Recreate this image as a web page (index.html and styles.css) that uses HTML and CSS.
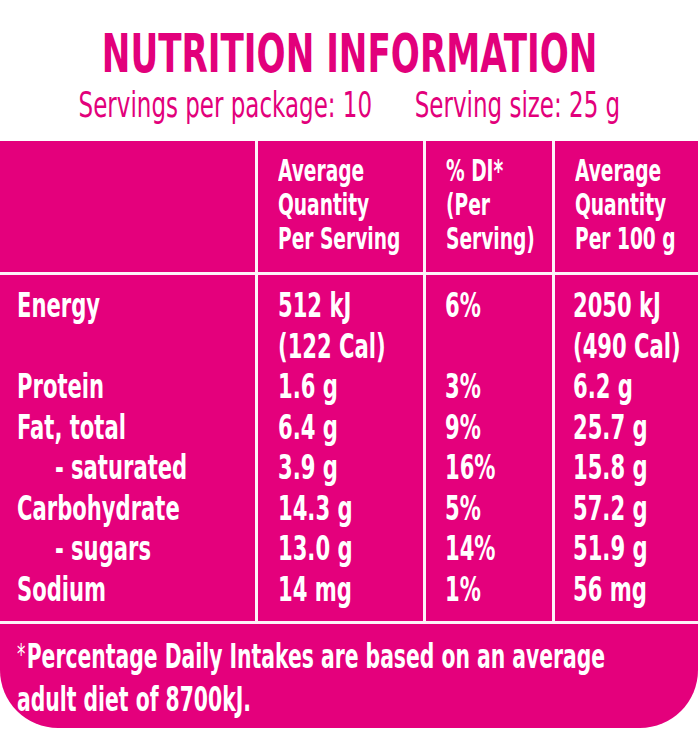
FILE: index.html
```html
<!DOCTYPE html>
<html lang="en">
<head>
<meta charset="utf-8">
<title>Nutrition Information</title>
<link rel="stylesheet" href="styles.css">
</head>
<body>
<div class="card">
  <header class="head">
    <h1 class="title"><span class="squeeze-c">NUTRITION INFORMATION</span></h1>
    <p class="servings"><span class="squeeze-c">Servings per package: 10<span class="spacer"></span>Serving size: 25 g</span></p>
  </header>
  <div class="panel">
    <div class="cell hcell"></div>
    <div class="cell hcell"><div class="txt"><div>Average</div><div>Quantity</div><div>Per Serving</div></div></div>
    <div class="cell hcell"><div class="txt"><div>% DI*</div><div>(Per</div><div>Serving)</div></div></div>
    <div class="cell hcell"><div class="txt"><div>Average</div><div>Quantity</div><div>Per 100 g</div></div></div>

    <div class="cell bcell names"><div class="txt">
      <div>Energy</div><div>&nbsp;</div>
      <div>Protein</div>
      <div>Fat, total</div>
      <div class="sub">- saturated</div>
      <div>Carbohydrate</div>
      <div class="sub">- sugars</div>
      <div>Sodium</div>
    </div></div>
    <div class="cell bcell"><div class="txt">
      <div>512 kJ</div><div>(122 Cal)</div>
      <div>1.6 g</div>
      <div>6.4 g</div>
      <div>3.9 g</div>
      <div>14.3 g</div>
      <div>13.0 g</div>
      <div>14 mg</div>
    </div></div>
    <div class="cell bcell pct"><div class="txt">
      <div>6%</div><div>&nbsp;</div>
      <div>3%</div>
      <div>9%</div>
      <div>16%</div>
      <div>5%</div>
      <div>14%</div>
      <div>1%</div>
    </div></div>
    <div class="cell bcell per100"><div class="txt">
      <div>2050 kJ</div><div>(490 Cal)</div>
      <div>6.2 g</div>
      <div>25.7 g</div>
      <div>15.8 g</div>
      <div>57.2 g</div>
      <div>51.9 g</div>
      <div>56 mg</div>
    </div></div>

    <div class="cell foot"><div class="txt"><div><span class="ast">*</span>Percentage Daily Intakes are based on an average</div><div>adult diet of 8700kJ.</div></div></div>
  </div>
</div>
</body>
</html>
```
FILE: styles.css
```css
html, body {
  margin: 0;
  padding: 0;
  background: #ffffff;
}
body {
  width: 698px;
  height: 731px;
  overflow: hidden;
  font-family: "DejaVu Sans Condensed", "DejaVu Sans", sans-serif;
  font-stretch: condensed;
}
.card {
  width: 698px;
  height: 728px;
  background: #ffffff;
  border-radius: 48px;
  overflow: hidden;
  display: flex;
  flex-direction: column;
}
.head {
  height: 141px;
  flex: none;
  padding-top: 26px;
  box-sizing: border-box;
  color: #e2007b;
}
.squeeze-c {
  flex: none;
  white-space: nowrap;
  transform-origin: 50% 0;
}
.title {
  margin: 0;
  display: flex;
  justify-content: center;
  font-size: 53px;
  line-height: 56px;
  font-weight: bold;
  padding-left: 2px;
}
.title .squeeze-c {
  transform: scaleX(0.717);
}
.servings {
  margin: 3px 0 0;
  display: flex;
  justify-content: center;
  font-size: 36px;
  line-height: 40px;
  font-weight: normal;
}
.servings .squeeze-c {
  transform: scaleX(0.71);
}
.spacer {
  display: inline-block;
  width: 60px;
}
.panel {
  flex: 1;
  display: grid;
  grid-template-columns: 255px 165px 126px 1fr;
  grid-template-rows: 131px 346px 1fr;
  gap: 3px;
  background: #fdf2f8;
  border-radius: 0 0 58px 58px;
  overflow: hidden;
}
.cell {
  background: #e4007c;
  color: #ffffff;
  font-weight: bold;
  padding-left: 20px;
  overflow: hidden;
}
.txt {
  white-space: nowrap;
  transform: scaleX(0.69);
  transform-origin: 0 0;
}
.hcell {
  font-size: 30px;
  line-height: 34px;
  padding-top: 13px;
}
.bcell {
  font-size: 34px;
  line-height: 40.5px;
  padding-top: 10px;
}
.names {
  padding-left: 17px;
}
.pct {
  padding-left: 19px;
}
.per100 {
  padding-left: 18px;
}
.sub {
  padding-left: 55px;
}
.foot {
  grid-column: 1 / -1;
  font-size: 34px;
  line-height: 43px;
  padding-top: 9px;
  padding-left: 17px;
}
.foot .txt {
  transform: scaleX(0.665);
}
.ast {
  font-weight: normal;
  font-size: 28px;
  vertical-align: 4px;
  margin-right: 2px;
}
```
